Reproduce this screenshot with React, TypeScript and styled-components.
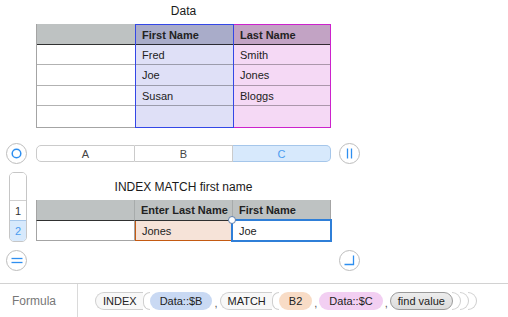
import React from 'react'
import styled, { createGlobalStyle } from 'styled-components'

const GlobalStyle = createGlobalStyle`
  html, body {
    margin: 0;
    padding: 0;
    background: #ffffff;
  }
  body {
    font-family: "Liberation Sans", Arial, sans-serif;
    color: #222;
  }
`

type Tone = 'plain' | 'blue' | 'pink' | 'peach'

const HEAD_BG: { [k in Tone]: string } = {
  plain: '#bec2c2',
  blue: '#a9acc9',
  pink: '#c2a3c4',
  peach: '#bec2c2'
}

const BODY_BG: { [k in Tone]: string } = {
  plain: '#ffffff',
  blue: '#dfe0f7',
  pink: '#f5d9f5',
  peach: '#f6e3d8'
}

const OUTLINE: { [k in Tone]: string } = {
  plain: '#a4a4a4',
  blue: '#3447e6',
  pink: '#cc22cc',
  peach: '#c45a12'
}

const Page = styled.div`
  width: 508px;
  height: 317px;
  display: flex;
  flex-direction: column;
  overflow: hidden;
`

const Canvas = styled.div`
  flex: 1;
  display: flex;
  flex-direction: column;
  padding-top: 4px;
`

const TitleRow = styled.div`
  margin-left: 36px;
  width: 295px;
  height: 14px;
  line-height: 14px;
  font-size: 12px;
  text-align: center;
  color: #1a1a1a;
`

const DataTable = styled.div`
  display: flex;
  align-items: flex-start;
  margin-top: 6px;
  margin-left: 36px;
  width: 295px;
`

const Column = styled.div<{ tone: Tone; width: number; joinLeft?: boolean }>`
  box-sizing: border-box;
  width: ${({ width }) => width}px;
  display: flex;
  flex-direction: column;
  border: 1px solid ${({ tone }) => OUTLINE[tone]};
  border-top-width: ${({ tone }) => (tone === 'plain' ? 0 : 1)}px;
  border-right-width: ${({ tone }) => (tone === 'plain' ? 0 : 1)}px;
  border-left-width: ${({ joinLeft }) => (joinLeft ? 0 : 1)}px;
  background: ${({ tone }) => BODY_BG[tone]};
`

const Cell = styled.div<{ tone: Tone; head?: boolean; h: number; last?: boolean }>`
  box-sizing: border-box;
  height: ${({ h }) => h}px;
  display: flex;
  align-items: center;
  padding-left: 6px;
  font-size: 11px;
  font-weight: ${({ head }) => (head ? 700 : 400)};
  color: #222;
  background: ${({ tone, head }) => (head ? HEAD_BG[tone] : BODY_BG[tone])};
  border-bottom: ${({ head, last }) =>
    head ? '1px solid rgba(0,0,0,0.75)' : last ? '0' : '1px solid rgba(0,0,0,0.3)'};
`

const ControlRow = styled.div`
  display: flex;
  align-items: center;
  height: 21px;
  margin-top: 15px;
  padding-left: 6px;
`

const CircleButton = styled.div`
  box-sizing: border-box;
  width: 21px;
  height: 21px;
  border-radius: 50%;
  border: 1px solid #bdbdbd;
  background: #fff;
  display: flex;
  align-items: center;
  justify-content: center;
  flex-shrink: 0;
`

const ColumnBar = styled.div`
  display: flex;
  width: 295px;
  height: 17px;
  margin-left: 9px;
  margin-right: 8px;
`

const ColumnTab = styled.div<{ active?: boolean; first?: boolean; last?: boolean; width: number }>`
  box-sizing: border-box;
  width: ${({ width }) => width}px;
  display: flex;
  align-items: center;
  justify-content: center;
  font-size: 11px;
  color: ${({ active }) => (active ? '#4a9cf0' : '#444')};
  background: ${({ active }) => (active ? '#d7e9fc' : '#fff')};
  border: 1px solid ${({ active }) => (active ? '#a5c6ea' : '#cbcbcb')};
  border-left-width: ${({ first }) => (first ? 1 : 0)}px;
  border-radius: ${({ first, last }) => (first ? '5px 0 0 5px' : last ? '0 5px 5px 0' : '0')};
`

const LowerBlock = styled.div`
  display: flex;
  margin-top: 8px;
  padding-left: 9px;
`

const RowHeader = styled.div`
  box-sizing: border-box;
  width: 18px;
  display: flex;
  flex-direction: column;
  border: 1px solid #c6c6c6;
  border-radius: 5px;
  overflow: hidden;
`

const RowNumber = styled.div<{ active?: boolean; h: number }>`
  box-sizing: border-box;
  height: ${({ h }) => h}px;
  display: flex;
  align-items: center;
  justify-content: center;
  font-size: 11px;
  color: ${({ active }) => (active ? '#4a9cf0' : '#333')};
  background: ${({ active }) => (active ? '#d7e9fc' : '#fff')};
  border-top: 1px solid ${({ active }) => (active ? '#a5c6ea' : '#d0d0d0')};
  &:first-child {
    border-top: 0;
  }
`

const LowerContent = styled.div`
  display: flex;
  flex-direction: column;
  margin-left: 9px;
  padding-top: 8px;
`

const LowerTitle = styled(TitleRow)`
  margin-left: 0;
`

const MatchTable = styled.div`
  display: grid;
  grid-template-columns: 99px 98px 98px;
  grid-template-rows: 21px 20px;
  margin-top: 6px;
`

const MatchCell = styled.div<{ head?: boolean; tone?: Tone; edge?: 'left' | 'right' }>`
  position: relative;
  box-sizing: border-box;
  display: flex;
  align-items: center;
  padding-left: 6px;
  font-size: 11px;
  font-weight: ${({ head }) => (head ? 700 : 400)};
  color: #222;
  background: ${({ head, tone }) => (head ? '#bec2c2' : BODY_BG[tone || 'plain'])};
  border-bottom: 1px solid ${({ head }) => (head ? 'rgba(0,0,0,0.75)' : '#a4a4a4')};
  border-left: ${({ edge }) => (edge === 'left' ? '1px solid #a4a4a4' : '0')};
  border-right: 1px solid ${({ head }) => (head ? 'rgba(0,0,0,0.12)' : '#a4a4a4')};
  &:nth-child(3) {
    border-right-color: #a4a4a4;
  }
`

const InputCell = styled(MatchCell)`
  border: 1px solid ${OUTLINE.peach};
  border-top: 0;
`

const Selection = styled.div`
  position: absolute;
  left: -2px;
  top: -2px;
  right: -2px;
  bottom: -2px;
  border: 2px solid #2f7fd8;
  pointer-events: none;
`

const Handle = styled.div`
  position: absolute;
  left: -5px;
  top: -5px;
  width: 6px;
  height: 6px;
  border-radius: 50%;
  background: #fff;
  border: 1px solid #5b7fb0;
`

const FooterRow = styled.div`
  display: flex;
  justify-content: space-between;
  align-items: center;
  height: 21px;
  margin-top: 8px;
  padding-left: 6px;
  width: 354px;
`

const FormulaBar = styled.div`
  box-sizing: border-box;
  height: 34px;
  display: flex;
  align-items: center;
  border-top: 1px solid #d2d2d2;
`

const FormulaLabel = styled.div`
  box-sizing: border-box;
  width: 78px;
  height: 100%;
  display: flex;
  align-items: center;
  padding-left: 12px;
  font-size: 12px;
  color: #777;
  border-right: 1px solid #dadada;
`

const Tokens = styled.div`
  display: flex;
  align-items: center;
  margin-left: 17px;
  height: 18px;
`

const FuncName = styled.span`
  box-sizing: border-box;
  height: 18px;
  display: flex;
  align-items: center;
  padding: 0 6px 0 7px;
  font-size: 11px;
  color: #222;
  background: #f8f8f8;
  border: 1px solid #cfcfcf;
  border-right: 0;
  border-radius: 9px 0 0 9px;
`

const Paren = styled.span<{ close?: boolean }>`
  box-sizing: border-box;
  width: ${({ close }) => (close ? 9 : 7)}px;
  height: 18px;
  border: 1px solid #cfcfcf;
  border-width: ${({ close }) => (close ? '1px 1px 1px 0' : '1px 0 1px 1px')};
  border-radius: ${({ close }) => (close ? '0 9px 9px 0' : '9px 0 0 9px')};
  background: ${({ close }) => (close ? 'transparent' : '#fff')};
  margin-left: ${({ close }) => (close ? '-1px' : '0')};
`

const Arg = styled.span<{ bg: string }>`
  box-sizing: border-box;
  height: 18px;
  display: flex;
  align-items: center;
  padding: 0 10px;
  font-size: 11px;
  color: #222;
  background: ${({ bg }) => bg};
  border-radius: 9px;
`

const Comma = styled.span`
  font-size: 11px;
  color: #555;
  padding: 4px 2px 0 2px;
`

const Placeholder = styled.span`
  box-sizing: border-box;
  height: 18px;
  display: flex;
  align-items: center;
  padding: 0 7px;
  font-size: 11px;
  color: #222;
  background: linear-gradient(#ededed, #dcdcdc);
  border: 1px solid #9a9a9a;
  border-radius: 9px;
`

const ICON = '#2e8ff0'

function RingIcon() {
  return (
    <svg width="11" height="11" viewBox="0 0 11 11">
      <circle cx="5.5" cy="5.5" r="4.3" fill="none" stroke={ICON} strokeWidth="1.5" />
    </svg>
  )
}

function PauseIcon() {
  return (
    <svg width="9" height="11" viewBox="0 0 9 11">
      <line x1="2.5" y1="0.5" x2="2.5" y2="10.5" stroke={ICON} strokeWidth="1.3" />
      <line x1="6.5" y1="0.5" x2="6.5" y2="10.5" stroke={ICON} strokeWidth="1.3" />
    </svg>
  )
}

function EqualsIcon() {
  return (
    <svg width="12" height="7" viewBox="0 0 12 7">
      <line x1="0.5" y1="1.5" x2="11.5" y2="1.5" stroke={ICON} strokeWidth="1.3" />
      <line x1="0.5" y1="5.5" x2="11.5" y2="5.5" stroke={ICON} strokeWidth="1.3" />
    </svg>
  )
}

function CornerIcon() {
  return (
    <svg width="11" height="11" viewBox="0 0 11 11">
      <polyline points="9.5,0.5 9.5,9.5 0.5,9.5" fill="none" stroke={ICON} strokeWidth="1.3" />
    </svg>
  )
}

const dataRows = [
  ['', 'Fred', 'Smith'],
  ['', 'Joe', 'Jones'],
  ['', 'Susan', 'Bloggs'],
  ['', '', '']
]

const rowHeights = [20, 21, 20, 21]

export default function App() {
  const columns: { tone: Tone; width: number; head: string }[] = [
    { tone: 'plain', width: 99, head: '' },
    { tone: 'blue', width: 99, head: 'First Name' },
    { tone: 'pink', width: 97, head: 'Last Name' }
  ]

  return (
    <Page>
      <GlobalStyle />
      <Canvas>
        <TitleRow>Data</TitleRow>
        <DataTable>
          {columns.map((col, ci) => (
            <Column key={ci} tone={col.tone} width={col.width} joinLeft={ci === 2}>
              <Cell tone={col.tone} head h={ci === 0 ? 21 : 20}>
                {col.head}
              </Cell>
              {dataRows.map((row, ri) => (
                <Cell key={ri} tone={col.tone} h={rowHeights[ri]} last={ri === dataRows.length - 1}>
                  {row[ci]}
                </Cell>
              ))}
            </Column>
          ))}
        </DataTable>

        <ControlRow>
          <CircleButton>
            <RingIcon />
          </CircleButton>
          <ColumnBar>
            <ColumnTab first width={99}>A</ColumnTab>
            <ColumnTab width={98}>B</ColumnTab>
            <ColumnTab last active width={98}>C</ColumnTab>
          </ColumnBar>
          <CircleButton>
            <PauseIcon />
          </CircleButton>
        </ControlRow>

        <LowerBlock>
          <RowHeader>
            <RowNumber h={27} />
            <RowNumber h={20}>1</RowNumber>
            <RowNumber h={21} active>2</RowNumber>
          </RowHeader>
          <LowerContent>
            <LowerTitle>INDEX MATCH first name</LowerTitle>
            <MatchTable>
              <MatchCell head edge="left" />
              <MatchCell head>Enter Last Name</MatchCell>
              <MatchCell head>First Name</MatchCell>
              <MatchCell edge="left" />
              <InputCell tone="peach">Jones</InputCell>
              <MatchCell>
                Joe
                <Selection />
                <Handle />
              </MatchCell>
            </MatchTable>
          </LowerContent>
        </LowerBlock>

        <FooterRow>
          <CircleButton>
            <EqualsIcon />
          </CircleButton>
          <CircleButton>
            <CornerIcon />
          </CircleButton>
        </FooterRow>
      </Canvas>

      <FormulaBar>
        <FormulaLabel>Formula</FormulaLabel>
        <Tokens>
          <FuncName>INDEX</FuncName>
          <Paren />
          <Arg bg="#c9d9f3">Data::$B</Arg>
          <Comma>,</Comma>
          <FuncName>MATCH</FuncName>
          <Paren />
          <Arg bg="#f8dcc6">B2</Arg>
          <Comma>,</Comma>
          <Arg bg="#f2cff2">Data::$C</Arg>
          <Comma>,</Comma>
          <Placeholder>find value</Placeholder>
          <Paren close />
          <Paren close />
          <Paren close />
        </Tokens>
      </FormulaBar>
    </Page>
  )
}
